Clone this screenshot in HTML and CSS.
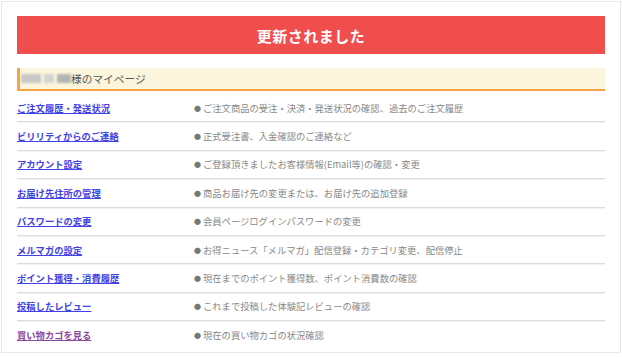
FILE: index.html
```html
<!DOCTYPE html>
<html lang="ja">
<head>
    <meta charset="UTF-8">
    <meta name="viewport" content="width=device-width, initial-scale=1.0">
    <title>マイページ</title>
    <link rel="stylesheet" href="styles.css">
</head>
<body>
    <div class="frame">
        <div class="notice">更新されました</div>

        <div class="mypage-head">
            <span class="masked"><i></i><i></i><i></i></span>様のマイページ
        </div>

        <ul class="menu">
            <li><a href="#">ご注文履歴・発送状況</a><span><b>●</b>ご注文商品の受注・決済・発送状況の確認、過去のご注文履歴</span></li>
            <li><a href="#">ビリリティからのご連絡</a><span><b>●</b>正式受注書、入金確認のご連絡など</span></li>
            <li><a href="#">アカウント設定</a><span><b>●</b>ご登録頂きましたお客様情報(Email等)の確認・変更</span></li>
            <li><a href="#">お届け先住所の管理</a><span><b>●</b>商品お届け先の変更または、お届け先の追加登録</span></li>
            <li><a href="#">パスワードの変更</a><span><b>●</b>会員ページログインパスワードの変更</span></li>
            <li><a href="#">メルマガの設定</a><span><b>●</b>お得ニュース「メルマガ」配信登録・カテゴリ変更、配信停止</span></li>
            <li><a href="#">ポイント獲得・消費履歴</a><span><b>●</b>現在までのポイント獲得数、ポイント消費数の確認</span></li>
            <li><a href="#">投稿したレビュー</a><span><b>●</b>これまで投稿した体験記レビューの確認</span></li>
            <li><a href="#" class="visited">買い物カゴを見る</a><span><b>●</b>現在の買い物カゴの状況確認</span></li>
        </ul>
    </div>
</body>
</html>
```

FILE: styles.css
```css
body { margin: 0; background-color: #fff; font-family: "Noto Sans CJK JP", "Noto Sans", sans-serif; }
.frame { margin: 1px; height: 352px; border: 1px solid #e8e8e8; padding: 14px 15px 0; box-sizing: border-box; }
.notice { height: 38px; background-color: #f04d4d; color: #fff; font-size: 15px; font-weight: bold; display: flex; justify-content: center; align-items: center; letter-spacing: 0.5px; }
.mypage-head { margin-top: 14px; height: 21px; background-color: #faf5dc; border-left: 3px solid #f9a244; border-bottom: 2px solid #f9a244; padding-left: 1px; font-size: 10.7px; color: #555; display: flex; align-items: center; }
.masked { display: flex; gap: 3px; filter: blur(1.2px); }
.masked i { display: block; height: 9px; background-color: #bbb; }
.masked i:nth-child(1) { width: 20px; background-color: #c8c8c8; }
.masked i:nth-child(2) { width: 10px; background-color: #d4d4d4; }
.masked i:nth-child(3) { width: 14px; background-color: #b4b4b4; }
.menu { list-style: none; margin: 3px 0 0; padding: 0; }
.menu li { display: grid; grid-template-columns: 177px 1fr; align-items: center; height: 28.4px; box-sizing: border-box; border-bottom: 1px solid #dcdcdc; box-shadow: 0 1px 0 #f2f2f2; }
.menu li:last-child { border-bottom: none; box-shadow: none; }
.menu a { font-size: 9.3px; font-weight: bold; color: #4141e6; text-decoration: underline; }
.menu a.visited { color: #8a4a9e; }
.menu span { font-size: 9.3px; color: #888; display: flex; align-items: center; }
.menu span b { font-size: 7px; font-weight: normal; color: #777; margin-right: 2px; }
```
